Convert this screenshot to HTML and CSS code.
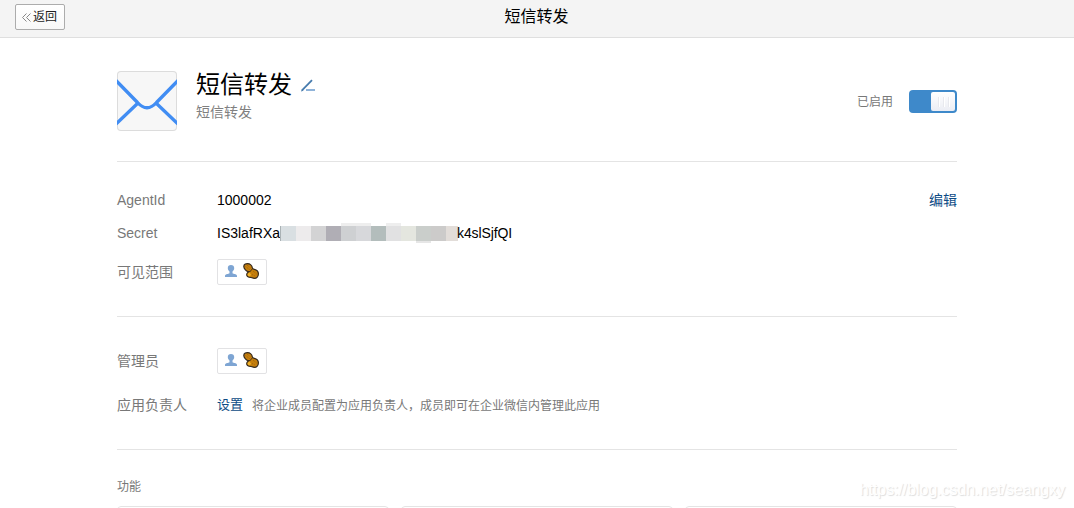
FILE: index.html
```html
<!DOCTYPE html>
<html lang="zh-CN">
<head>
	<meta charset="UTF-8">
	<title>短信转发</title>
	<link rel="stylesheet" href="styles.css">
</head>
<body>
	<svg class="defs" width="0" height="0">
		<symbol id="member" viewBox="0 0 12 12">
			<path fill="#7ea5d3" d="M6 0C4 0 2.800 1 2.800 3c0 1.700.700 2.700 1.700 3.500v1.800C3.500 9 0 9 0 11v1h12v-1c0-2-3.500-2-4.500-2.700V6.500C8.500 5.700 9.200 4.700 9.200 3c0-2-1.200-3-3.200-3z"/>
		</symbol>
		<symbol id="peanut" viewBox="0 0 16 16">
			<path fill="#c67f0c" stroke="#33281c" stroke-width="1.200" d="M.800 3.500C.800 1.500 2.500.700 4.500.700 7 .700 9.200 2.500 9.200 4.500c0 1 .500 1.500 2 1.800 2.500.500 4.200 2.200 4.200 4.500 0 2.500-1.700 4.500-4 4.500-1.500 0-2.500-.600-3.500-.800-2.200-.200-4.200-.900-4.200-2.700 0-1.500 1-2.300 1.600-3C3 8 .800 5.500.800 3.500z"/>
			<path fill="#f0b127" d="M4.500 11l2-1.500 1.500 2-1 2-2-.500z"/>
			<path fill="none" stroke="#33281c" d="M5 8.700c1.500.300 3-.500 4-2.500"/>
			<path fill="none" stroke="#8a560d" stroke-width=".7" stroke-dasharray="1 1" d="M2.500 3.500l4 3M4 2l3.500 3M10 8l3.500 3M9 11.500l3 1.500"/>
		</symbol>
	</svg>

	<div class="topbar">
		<a class="back">
			<svg width="9" height="9" viewBox="0 0 9 9"><path d="M4.500.500l-4 4 4 4M8.500.500l-4 4 4 4" fill="none" stroke="#888"/></svg>
			<span>返回</span>
		</a>
		<div class="topbar-title">短信转发</div>
	</div>

	<div class="container">
		<div class="app">
			<div class="app-logo">
				<svg width="60" height="60" viewBox="0 0 60 60">
					<g fill="none" stroke="#418df3" stroke-width="3.300">
						<path d="M-1 9.500L20.500 31.500Q30 42 39.500 31.500L61 9.500"/>
						<path d="M-1 53L20.500 32.500M61 53L39.500 32.500"/>
					</g>
				</svg>
			</div>
			<div class="app-info">
				<div class="app-name">
					<span>短信转发</span>
					<svg width="14" height="13" viewBox="0 0 14 13">
						<path d="M1.200 11.200L11 1.200" stroke="#467bad" stroke-width="1.800"/>
						<path d="M5 11h9" stroke="#8fb3d9" stroke-width="2"/>
						<path d="M0 12.500l.800-2.500 1.700 1.700z" fill="#467bad"/>
					</svg>
				</div>
				<div class="app-desc">短信转发</div>
			</div>
			<div class="app-status">已启用</div>
			<div class="switch"><div class="switch-knob"><i></i><i></i><i></i></div></div>
		</div>

		<div class="section section-info">
			<div class="row">
				<div class="label">AgentId</div>
				<div class="value">1000002</div>
				<a class="link edit">编辑</a>
			</div>
			<div class="row">
				<div class="label">Secret</div>
				<div class="value secret">IS3lafRXa</div>
				<div class="mosaic">
					<i class="m0"></i><i class="m1"></i><i class="m2"></i><i class="m3"></i><i class="m4"></i><i class="m5 up"></i><i class="m6 up"></i><i class="m7"></i><i class="m8 up"></i><i class="m9"></i><i class="m10 down"></i><i class="m11"></i><i class="m12"></i>
				</div>
				<div class="value secret-end">k4slSjfQI</div>
			</div>
			<div class="row row-member">
				<div class="label">可见范围</div>
				<div class="member">
					<svg width="12" height="12"><use href="#member"/></svg>
					<svg width="16" height="16"><use href="#peanut"/></svg>
				</div>
			</div>
		</div>

		<div class="section section-admin">
			<div class="row row-member">
				<div class="label">管理员</div>
				<div class="member">
					<svg width="12" height="12"><use href="#member"/></svg>
					<svg width="16" height="16"><use href="#peanut"/></svg>
				</div>
			</div>
			<div class="row">
				<div class="label">应用负责人</div>
				<a class="link">设置</a>
				<div class="tip">将企业成员配置为应用负责人，成员即可在企业微信内管理此应用</div>
			</div>
		</div>

		<div class="feature-title">功能</div>
		<div class="cards">
			<div class="card"></div>
			<div class="card"></div>
			<div class="card"></div>
		</div>
	</div>

	<div class="watermark">https://blog.csdn.net/seangxy</div>
</body>
</html>
```
FILE: styles.css
```css
body {
	margin: 0;
	background: #fff;
	color: #000;
	font: 14px/20px "Liberation Sans", "Noto Sans CJK SC", sans-serif;
}
svg {
	display: block;
	flex: none;
}
.defs {
	position: absolute;
}
.topbar {
	display: grid;
	grid-template-columns: 1fr auto 1fr;
	height: 37px;
	background: #f4f4f4;
	border-bottom: 1px solid #dfdfdf;
}
.back {
	display: flex;
	align-items: center;
	gap: 2px;
	box-sizing: border-box;
	width: 50px;
	height: 26px;
	margin: 4px 0 0 15px;
	padding-left: 6px;
	border: 1px solid #acacac;
	border-radius: 2px;
	background: linear-gradient(#fff, #f8f8f8);
	color: #222;
	font-size: 12px;
}
.topbar-title {
	padding-right: 1px;
	font-size: 16px;
	line-height: 33px;
}
.container {
	width: 840px;
	margin: 0 auto;
}
.app {
	display: flex;
	height: 90px;
	padding-top: 33px;
	border-bottom: 1px solid #e4e4e4;
}
.app-logo {
	box-sizing: border-box;
	width: 60px;
	height: 60px;
	border-radius: 4px;
	background: #f7f7f7;
	box-shadow: inset 0 0 0 1px #dcdcdc;
	overflow: hidden;
}
.app-info {
	flex: 1;
	padding-left: 19px;
}
.app-name {
	display: flex;
	align-items: center;
	gap: 9px;
	height: 28px;
	font-size: 24px;
	line-height: 28px;
}
.app-desc {
	margin-top: 3px;
	color: #808080;
}
.app-status {
	margin: 21px 16px 0 0;
	color: #787878;
	font-size: 12px;
}
.switch {
	box-sizing: border-box;
	width: 48px;
	height: 23px;
	margin-top: 19px;
	padding: 2px 2px 2px 22px;
	border-radius: 4px;
	background: #3e89ca;
}
.switch-knob {
	display: flex;
	justify-content: center;
	align-items: center;
	gap: 4px;
	height: 19px;
	border-radius: 2px;
	background: linear-gradient(#fff, #ebedf4);
}
.switch-knob i {
	width: 1px;
	height: 10px;
	background: #e8e9ee;
	box-shadow: 1px 0 #fff;
}
.section {
	box-sizing: border-box;
	border-bottom: 1px solid #e4e4e4;
}
.section-info {
	height: 155px;
	padding-top: 28px;
}
.section-admin {
	height: 133px;
	padding-top: 31px;
}
.row {
	display: flex;
	align-items: center;
	height: 20px;
	margin-bottom: 13px;
}
.row-member {
	height: 26px;
	margin-bottom: 21px;
}
.section-info .row-member {
	margin-top: 16px;
}
.label {
	width: 100px;
	color: #787878;
}
.secret {
	width: 63px;
}
.secret-end {
	margin-left: -1px;
	letter-spacing: -.1px;
}
.link {
	color: #0d4b85;
	font-size: 13px;
}
.edit {
	margin-left: auto;
	font-size: 14px;
}
.mosaic {
	display: flex;
	width: 178px;
	height: 15px;
}
.mosaic i {
	flex: none;
	width: 15px;
	height: 15px;
}
.mosaic .m0 { width: 1px; background: #aab2b5; }
.mosaic .m1 { background: #d9dfe2; }
.mosaic .m2 { background: #edebec; }
.mosaic .m3 { background: #d3d3d4; }
.mosaic .m4 { background: #b0aeb5; }
.mosaic .m5 { background: #ced0d2; }
.mosaic .m6 { background: #d7d8db; }
.mosaic .m7 { background: #b3bdbc; }
.mosaic .m8 { background: #e1e1e2; }
.mosaic .m9 { background: #e4e6df; }
.mosaic .m10 { background: #cacecb; }
.mosaic .m11 { background: #cccbca; }
.mosaic .m12 { width: 12px; background: #e2ddd9; }
.mosaic .up { box-shadow: 0 -3px #eee; }
.mosaic .down { box-shadow: 0 2px #e6e6e6; }
.member {
	display: flex;
	align-items: center;
	gap: 6px;
	box-sizing: border-box;
	width: 50px;
	height: 26px;
	padding: 0 0 2px 7px;
	border: 1px solid #e2e2e4;
	border-radius: 2px;
}
.tip {
	margin-left: 9px;
	padding-top: 2px;
	color: #787878;
	font-size: 12px;
}
.feature-title {
	height: 29px;
	padding-top: 27px;
	color: #787878;
	font-size: 12px;
}
.cards {
	display: grid;
	grid-template-columns: repeat(3, 1fr);
	gap: 12px;
	height: 2px;
	overflow: hidden;
}
.card {
	height: 80px;
	border: 1px solid #e4e4e4;
	border-radius: 4px;
}
.watermark {
	position: absolute;
	right: 9px;
	bottom: 8px;
	color: #fff;
	font-size: 16px;
	letter-spacing: -.07px;
	text-shadow: 1px 1px 1px #ddd;
}
```
